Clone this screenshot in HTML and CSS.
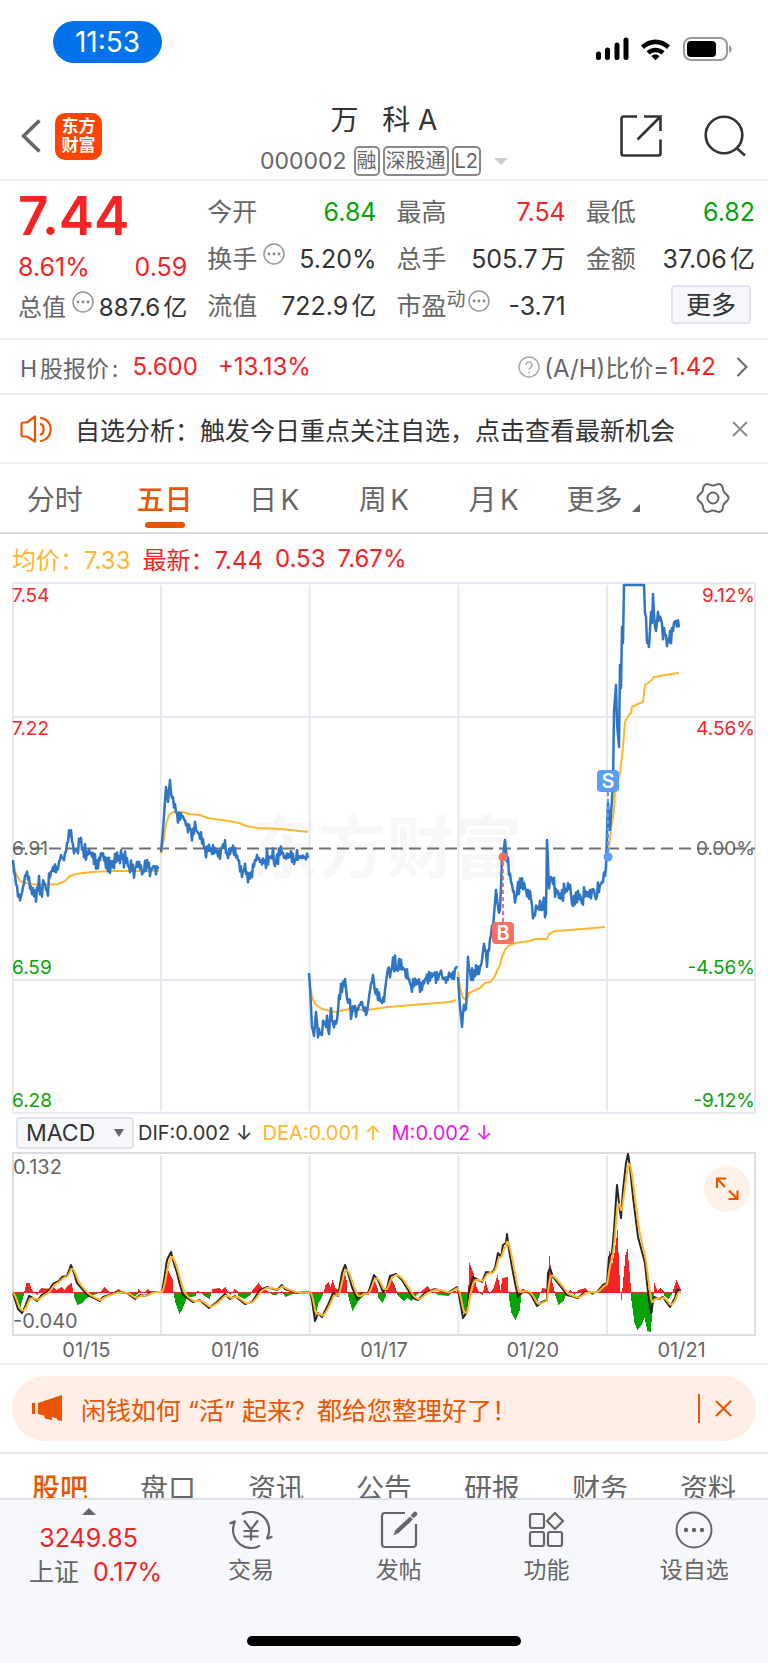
FILE: index.html
```html
<!DOCTYPE html>
<html lang="zh-CN">
<head>
    <meta charset="UTF-8">
    <title>万 科A 000002</title>
    <meta name="viewport" content="width=device-width, initial-scale=1.0">
    <link rel="stylesheet" href="styles.css">
</head>
<body>
    <div class="statusbar">
        <span class="statusbar__time">11:53</span>
        <svg class="statusbar__icons" width="137" height="26" viewBox="0 0 137 26">
            <g stroke="#000" stroke-width="5" stroke-linecap="round">
                <path d="M3.500 18v3.500M12.500 14v7.500M22 9v12.500M31 4v17.500"/>
            </g>
            <path d="M46 9.500c8-8 21-8 29 0l-3 3.400c-6.500-6.300-16.500-6.300-23 0zM51.500 15.200c5-4.700 13-4.700 18 0l-3.100 3.200c-3.300-3-8.500-3-11.800 0zM60.500 24.300l-4.200-4.200c2.400-2.100 6-2.100 8.400 0z"/>
            <rect x="89" y="2" width="43" height="22" rx="7" fill="none" stroke="#999" stroke-width="2"/>
            <rect x="92" y="5" width="29" height="16" rx="4"/>
            <path d="M134 9c3.500 1.500 3.500 6.500 0 8z" fill="#999"/>
        </svg>
    </div>

    <header class="header">
        <div class="header__left">
            <button class="icon-button" aria-label="返回">
                <svg width="20" height="34" viewBox="0 0 20 34" fill="none" stroke="#666" stroke-width="3.600"><path d="M18.500 1.500L2.500 17l16 15.500"/></svg>
            </button>
            <a class="logo" href="#"><span>东方</span><span>财富</span></a>
        </div>
        <div class="header__title">
            <h1>万&nbsp;&nbsp; 科 A</h1>
            <div class="header__code">
                <span>000002</span>
                <span class="badge">融</span>
                <span class="badge">深股通</span>
                <span class="badge">L2</span>
                <i class="caret"></i>
            </div>
        </div>
        <div class="header__right">
            <button class="icon-button" aria-label="分享">
                <svg width="42" height="42" viewBox="0 0 42 42" fill="none" stroke="#333" stroke-width="2.600">
                    <path d="M17 1.500H3.500a2 2 0 0 0-2 2v35a2 2 0 0 0 2 2h35a2 2 0 0 0 2-2V24.500M24 1.500h16.500V16M40.500 1.500L17.500 24.500"/>
                </svg>
            </button>
            <button class="icon-button" aria-label="搜索">
                <svg width="43" height="42" viewBox="0 0 43 42" fill="none" stroke="#333" stroke-width="2.600"><circle cx="20" cy="20" r="18.300"/><path d="M32.500 33L41 40.500"/></svg>
            </button>
        </div>
    </header>

    <section class="quote">
        <div class="quote__main">
            <strong>7.44</strong>
            <div class="pair up"><span>8.61%</span><span>0.59</span></div>
            <div class="pair pair--tight"><span class="label">总值<svg class="more" viewBox="0 0 22 22"><use href="#more-dots"/></svg></span><span>887.6亿</span></div>
        </div>
        <div class="quote__column">
            <div class="pair"><span class="label">今开</span><span class="down">6.84</span></div>
            <div class="pair"><span class="label">换手<svg class="more" viewBox="0 0 22 22"><use href="#more-dots"/></svg></span><span>5.20%</span></div>
            <div class="pair"><span class="label">流值</span><span>722.9亿</span></div>
        </div>
        <div class="quote__column">
            <div class="pair"><span class="label">最高</span><span class="up">7.54</span></div>
            <div class="pair"><span class="label">总手</span><span>505.7万</span></div>
            <div class="pair"><span class="label">市盈<small>动</small><svg class="more more--flush" viewBox="0 0 22 22"><use href="#more-dots"/></svg></span><span>-3.71</span></div>
        </div>
        <div class="quote__column">
            <div class="pair"><span class="label">最低</span><span class="down">6.82</span></div>
            <div class="pair"><span class="label">金额</span><span>37.06亿</span></div>
            <button class="quote__more">更多</button>
        </div>
    </section>

    <a class="hshare" href="#">
        <span class="label">H股报价:</span>
        <span class="up">5.600</span>
        <span class="up">+13.13%</span>
        <span class="hshare__ratio">
            <svg width="22" height="22" viewBox="0 0 22 22" fill="none" stroke="#aaa" stroke-width="1.500"><circle cx="11" cy="11" r="10"/><path d="M8 9a3 3 0 1 1 4.500 2.600c-1 .6-1.500 1-1.500 2.200M11 15.500v1.500"/></svg>
            (A/H)比价=<b class="up">1.42</b>
        </span>
        <svg width="12" height="20" viewBox="0 0 12 20" fill="none" stroke="#666" stroke-width="2"><path d="M1.500 1l9 9-9 9"/></svg>
    </a>

    <div class="notice">
        <svg width="33" height="28" viewBox="0 0 33 28" fill="none" stroke="#ea5504" stroke-width="2.200" stroke-linejoin="round" stroke-linecap="round">
            <path d="M1.500 9.500q0-2 2-2H7L15 1.500v25L7 21.500H3.500q-2 0-2-2zM21 9c3.500 2 3.500 8.500 0 10.500M21 3c13 2 13 20.500 0 23"/>
        </svg>
        <a href="#">自选分析：触发今日重点关注自选，点击查看最新机会</a>
        <button class="icon-button" aria-label="关闭">
            <svg width="16" height="16" viewBox="0 0 16 16" stroke="#888" stroke-width="1.800"><path d="M1 1l14 14M15 1L1 15"/></svg>
        </button>
    </div>

    <nav class="tabs">
        <button>分时</button>
        <button class="active">五日</button>
        <button>日K</button>
        <button>周K</button>
        <button>月K</button>
        <button>更多<i class="corner"></i></button>
        <button aria-label="设置">
            <svg width="34" height="32" viewBox="0 0 34 32" fill="none" stroke="#666" stroke-width="2">
                <path d="M9.250 2.600C12.300.85 13.500 3.500 17 3.500S21.700.85 24.750 2.600S26.050 6.700 27.800 9.750S32.500 12.500 32.500 16S29.550 19.200 27.800 22.250S27.800 27.650 24.750 29.400S20.500 28.500 17 28.500S12.300 31.150 9.250 29.400S7.950 25.300 6.200 22.250S1.500 19.500 1.500 16S4.450 12.800 6.200 9.750S6.200 4.350 9.250 2.600Z"/>
                <circle cx="17" cy="16" r="5.500"/>
            </svg>
        </button>
    </nav>

    <main class="charts">
        <div class="legend">
            <span class="avg">均价：7.33</span>
            <span class="up">最新：7.44</span>
            <span class="up">0.53</span>
            <span class="up">7.67%</span>
        </div>

        <svg class="chart" viewBox="0 0 744 532" role="img" aria-label="五日走势">
            <text class="watermark" x="374" y="291" text-anchor="middle">东方财富</text>
            <path class="grid" d="M1 1H743V531H1ZM149 3V529M297.500 3V529M446.500 3V529M595 3V529M1 135H743M1 398H743"/>
            <path class="base" d="M1 266.500H743"/>
            <g class="axis">
                <text class="up" x="0" y="20">7.54</text>
                <text class="up" x="0" y="153">7.22</text>
                <text x="0" y="273">6.91</text>
                <text class="down" x="0" y="392">6.59</text>
                <text class="down" x="0" y="525">6.28</text>
                <g text-anchor="end">
                    <text class="up" x="743" y="20">9.12%</text>
                    <text class="up" x="743" y="153">4.56%</text>
                    <text x="743" y="273">0.00%</text>
                    <text class="down" x="743" y="392">-4.56%</text>
                    <text class="down" x="743" y="525">-9.12%</text>
                </g>
            </g>
            <path id="average" class="line line--average"/>
            <path id="price" class="line line--price"/>
            <g class="mark mark--buy">
                <path d="M491 280V340"/>
                <circle cx="491" cy="275" r="4.500"/>
                <rect x="480" y="340" width="22" height="22" rx="4"/>
                <text x="491" y="358" text-anchor="middle">B</text>
            </g>
            <g class="mark mark--sell">
                <path d="M596 210V271"/>
                <circle cx="596" cy="275" r="4.500"/>
                <rect x="585" y="188" width="22" height="22" rx="4"/>
                <text x="596" y="206" text-anchor="middle">S</text>
            </g>
        </svg>

        <div class="indicator">
            <div class="indicator__select">
                <select aria-label="指标"><option>MACD</option></select>
                <i class="arrow-down"></i>
            </div>
            <span class="dif">DIF:0.002 ↓</span>
            <span class="avg">DEA:0.001 ↑</span>
            <span class="macd">M:0.002 ↓</span>
        </div>

        <div class="macd-chart">
            <svg class="chart" viewBox="0 0 744 184" role="img" aria-label="MACD">
                <path class="grid grid--macd" d="M1 1H743V183H1Z"/>
                <path class="grid" d="M149 3V182M297.500 3V182M446.500 3V182M595 3V182"/>
                <path id="bars-up" class="bars bars--up"/>
                <path id="bars-down" class="bars bars--down"/>
                <g class="axis axis--macd">
                    <text x="1" y="22">0.132</text>
                    <text x="1" y="176">-0.040</text>
                </g>
                <path id="dif" class="line line--dif"/>
                <path id="dea" class="line line--average"/>
            </svg>
            <button class="expand" aria-label="全屏">
                <svg width="24" height="24" viewBox="0 0 24 24" fill="none" stroke="#ea5504" stroke-width="2.200"><path d="M11 1.500H2V11M2 1.500L10 10M22.500 13.500V22H13.500M22.500 22L14 13.500"/></svg>
            </button>
        </div>
        <div class="dates">
            <span>01/15</span><span>01/16</span><span>01/17</span><span>01/20</span><span>01/21</span>
        </div>
    </main>

    <div class="promo">
        <div class="promo__inner">
            <svg width="31" height="27" viewBox="0 0 31 27" fill="#ea5504"><path d="M0 8h3v11H0zM6 8L30 0v26l-5-1v-1.500l-5-1.500v3l-7-1.500-1-3L6 19z"/></svg>
            <a href="#">闲钱如何 “活” 起来？都给您整理好了！</a>
            <i class="promo__rule"></i>
            <button class="icon-button" aria-label="关闭">
                <svg width="17" height="17" viewBox="0 0 17 17" stroke="#ea5504" stroke-width="2"><path d="M1 1l15 15M16 1L1 16"/></svg>
            </button>
        </div>
    </div>

    <nav class="sections">
        <a class="active" href="#">股吧</a>
        <a href="#">盘口</a>
        <a href="#">资讯</a>
        <a href="#">公告</a>
        <a href="#">研报</a>
        <a href="#">财务</a>
        <a href="#">资料</a>
    </nav>

    <footer class="toolbar">
        <div class="toolbar__items">
            <button class="toolbar__index">
                <i class="arrow-up"></i>
                <span class="up">3249.85</span>
                <span class="toolbar__change">上证 <b class="up">0.17%</b></span>
            </button>
            <button>
                <svg width="44" height="38" viewBox="0 0 44 38" fill="none" stroke="#666" stroke-width="2.200">
                    <path d="M13 3.400A18 18 0 0 1 39.400 24L38 27.500M31 34.600A18 18 0 0 1 4.600 14.500L6 10.500M6.500 10L.5 12.500M37.500 28l6-2.500M15 9.500l7 9 7-9M14.500 20h15M14.500 25.500h15M22 18.500v11"/>
                </svg>
                交易
            </button>
            <button>
                <svg width="38" height="38" viewBox="0 0 38 38" fill="none" stroke="#666" stroke-width="2.200">
                    <path d="M25 2H5a3 3 0 0 0-3 3v28a3 3 0 0 0 3 3h28a3 3 0 0 0 3-3V13"/>
                    <path d="M13.500 24.500l2-5.500L30 5.500l3 3L18.500 22z" fill="#666" stroke="none"/>
                    <path d="M33.500 4.500L35 3" stroke-width="4.500" stroke-linecap="round"/>
                </svg>
                发帖
            </button>
            <button>
                <svg width="38" height="38" viewBox="0 0 38 38" fill="none" stroke="#666" stroke-width="2.200" stroke-linejoin="round">
                    <rect x="3" y="3" width="14" height="14" rx="2"/><rect x="3" y="21" width="14" height="14" rx="2"/><rect x="21" y="21" width="14" height="14" rx="2"/><path d="M28 2l8 8-8 8-8-8z"/>
                </svg>
                功能
            </button>
            <button>
                <svg width="38" height="38" viewBox="0 0 38 38" fill="none" stroke="#666" stroke-width="2"><circle cx="19" cy="19" r="17.500"/><g fill="#666" stroke="none"><circle cx="11" cy="19" r="2.200"/><circle cx="19" cy="19" r="2.200"/><circle cx="27" cy="19" r="2.200"/></g></svg>
                设自选
            </button>
        </div>
        <div class="home-indicator"></div>
    </footer>

    <svg class="symbols" aria-hidden="true">
        <symbol id="more-dots" viewBox="0 0 22 22">
            <circle cx="11" cy="11" r="10" fill="none" stroke="#999" stroke-width="1.500"/>
            <g fill="#888"><circle cx="6" cy="11" r="1.400"/><circle cx="11" cy="11" r="1.400"/><circle cx="16" cy="11" r="1.400"/></g>
        </symbol>
    </svg>

    <script src="chart.js"></script>
</body>
</html>
```

FILE: styles.css
```css
body {
    margin: 0;
    background: #fff;
    color: #333;
    font-family: Inter, "Noto Sans CJK SC", sans-serif;
    font-size: 24px;
    text-autospace: normal;
}

* {
    box-sizing: border-box;
}

a {
    color: inherit;
    text-decoration: none;
}

b {
    font-weight: 400;
}

svg {
    flex: none;
}

button {
    padding: 0;
    border: 0;
    background: none;
    color: inherit;
    font: inherit;
    cursor: pointer;
}

.icon-button {
    display: flex;
}

.up {
    color: #f52323;
    fill: #f52323;
}

.down {
    color: #05a305;
    fill: #05a305;
}

.avg {
    color: #ffb62e;
}

.label {
    color: #666;
}

.symbols {
    position: absolute;
    width: 0;
    height: 0;
}

/* status bar */

.statusbar {
    display: flex;
    justify-content: space-between;
    height: 90px;
    padding: 21px 36px 0 53px;
}

.statusbar__time {
    width: 109px;
    height: 42px;
    border-radius: 21px;
    background: #0273eb;
    color: #fff;
    font-size: 28px;
    line-height: 43px;
    text-align: center;
}

.statusbar__icons {
    margin-top: 15px;
}

/* header */

.header {
    display: grid;
    grid-template-columns: 1fr auto 1fr;
    align-items: center;
    height: 91px;
    padding: 3px 21px 0;
    border-bottom: 2px solid #efefef;
}

.header__left,
.header__right {
    display: flex;
    align-items: center;
    gap: 14px;
}

.header__right {
    justify-content: flex-end;
    gap: 42px;
}

.logo {
    display: flex;
    flex-direction: column;
    align-items: center;
    justify-content: center;
    width: 47px;
    height: 47px;
    border-radius: 10px;
    background: #ff4400;
    color: #fff;
    font-size: 17px;
    font-weight: 700;
    line-height: 19px;
}

.header__title {
    display: flex;
    flex-direction: column;
    align-items: center;
    gap: 6px;
    padding-top: 4px;
}

.header__title h1 {
    margin: 0;
    font-size: 28px;
    font-weight: 400;
    line-height: 40px;
}

.header__code {
    display: flex;
    align-items: center;
    gap: 3px;
    color: #666;
    font-size: 23px;
    line-height: 30px;
}

.badge {
    height: 30px;
    padding: 0 1px;
    border: 2px solid #888;
    border-radius: 5px;
    font-size: 20px;
    line-height: 26px;
}

.badge:nth-child(2) {
    margin-left: 4px;
}

.caret {
    margin-left: 10px;
    border: 7px solid transparent;
    border-top-color: #ccc;
    border-bottom: 0;
}

/* quote */

.quote {
    display: grid;
    grid-template-columns: repeat(4, 1fr);
    gap: 20px;
    height: 159px;
    padding: 8px 13px 0 18px;
    border-bottom: 2px solid #efefef;
    font-size: 25px;
}

.quote__main strong {
    display: block;
    height: 55px;
    color: #f52323;
    font-size: 53px;
    font-weight: 600;
    line-height: 55px;
}

.pair {
    display: flex;
    justify-content: space-between;
    height: 47px;
    line-height: 47px;
    white-space: nowrap;
}

.quote__main .pair {
    height: 40px;
}

.quote__main .pair--tight {
    font-size: 24px;
}

.label small {
    font-size: 19px;
    line-height: 0;
    vertical-align: 9px;
}

.more {
    width: 22px;
    height: 22px;
    margin-left: 6px;
    vertical-align: 3px;
}

.more--flush {
    margin-left: 2px;
}

.quote__more {
    display: block;
    width: 80px;
    height: 39px;
    margin: 2px 4px 0 auto;
    border: 2px solid #e0e3ea;
    border-radius: 4px;
    background: #f7f8fb;
    line-height: 34px;
}

/* H share row and notice */

.hshare {
    display: flex;
    align-items: center;
    gap: 20px;
    height: 55px;
    padding: 0 20px;
    border-bottom: 2px solid #e8e8ea;
    font-size: 24px;
}

.hshare .label {
    margin-right: -6px;
    font-size: 23px;
}

.hshare__ratio {
    display: flex;
    align-items: center;
    margin-left: auto;
    color: #666;
}

.hshare__ratio svg {
    margin-right: 4px;
}

.notice {
    display: flex;
    align-items: center;
    height: 69px;
    padding: 0 20px;
    border-bottom: 2px solid #efefef;
    font-size: 25px;
}

.notice a {
    flex: 1;
    margin-left: 22px;
    white-space: nowrap;
}

/* period tabs */

.tabs {
    display: grid;
    grid-template-columns: repeat(7, 1fr);
    height: 70px;
    border-bottom: 2px solid #d8dce0;
    color: #666;
    font-size: 28px;
}

.tabs button {
    display: flex;
    align-items: center;
    justify-content: center;
    position: relative;
}

.tabs .active {
    color: #ea5504;
    font-weight: 500;
}

.tabs .active::after {
    content: "";
    position: absolute;
    bottom: 4px;
    width: 40px;
    height: 6px;
    border-radius: 3px;
    background: #ea5504;
}

.corner {
    align-self: flex-end;
    margin: 0 0 20px 10px;
    border-bottom: 8px solid #666;
    border-left: 8px solid transparent;
}

/* charts */

.charts {
    padding: 0 12px;
    border-bottom: 2px solid #efefef;
}

.legend {
    display: flex;
    align-items: center;
    gap: 12px;
    height: 48px;
    font-size: 24px;
}

.chart {
    display: block;
    width: 100%;
}

.grid {
    fill: none;
    stroke: #e6e9f0;
    stroke-width: 2;
}

.grid--macd {
    stroke: #d9dce1;
}

.base {
    stroke: #707070;
    stroke-width: 2;
    stroke-dasharray: 12 6;
}

.watermark {
    fill: #f7f7f7;
    font-size: 68px;
    font-weight: 700;
}

.axis {
    fill: #666;
    font-size: 19px;
}

.axis--macd {
    font-size: 20px;
}

.line {
    fill: none;
    stroke-width: 2;
    stroke-linejoin: round;
}

.line--price {
    stroke: #2f75c4;
    stroke-width: 2.500;
}

.line--average {
    stroke: #ffb62e;
}

.line--dif {
    stroke: #262626;
}

.bars {
    fill: none;
    stroke-width: 1;
}

.bars--up {
    stroke: #f52323;
}

.bars--down {
    stroke: #05a305;
}

.mark path {
    stroke-width: 2;
    stroke-dasharray: 4 3;
}

.mark text {
    fill: #fff;
    font-size: 20px;
    font-weight: 600;
}

.mark--buy {
    fill: #fa6e64;
}

.mark--buy path {
    stroke: #fa6e64;
}

.mark--sell {
    fill: #5a9dfa;
}

.mark--sell path {
    stroke: #5a9dfa;
}

.indicator {
    display: flex;
    align-items: center;
    gap: 10px;
    height: 38px;
    font-size: 20px;
}

.indicator__select {
    display: grid;
    align-items: center;
    width: 118px;
    height: 32px;
    margin-left: 4px;
}

.indicator__select select {
    grid-area: 1 / 1;
    height: 32px;
    padding: 0 8px;
    border: 2px solid #e0e3ea;
    border-radius: 4px;
    appearance: none;
    background: #f7f8fb;
    color: #333;
    font: inherit;
    font-size: 23px;
}

.arrow-down {
    grid-area: 1 / 1;
    justify-self: end;
    margin-right: 10px;
    border: 5px solid transparent;
    border-top: 8px solid #666;
    border-bottom: 0;
    pointer-events: none;
}

.dif {
    margin-left: -6px;
}

.macd {
    color: #e619e6;
}

.macd-chart {
    position: relative;
}

.expand {
    display: flex;
    align-items: center;
    justify-content: center;
    position: absolute;
    top: 14px;
    right: 6px;
    width: 46px;
    height: 46px;
    border-radius: 50%;
    background: #fff0e8;
}

.dates {
    display: grid;
    grid-template-columns: repeat(5, 1fr);
    height: 27px;
    color: #666;
    font-size: 20px;
    line-height: 29px;
    text-align: center;
}

/* promo */

.promo {
    padding: 11px 12px;
    border-bottom: 2px solid #e6e8ec;
}

.promo__inner {
    display: flex;
    align-items: center;
    height: 65px;
    padding: 0 24px 0 20px;
    border-radius: 33px;
    background: #feeee5;
    color: #ea5504;
    font-size: 25px;
}

.promo__inner a {
    flex: 1;
    margin-left: 18px;
    white-space: nowrap;
}

.promo__rule {
    width: 2px;
    height: 29px;
    margin-right: 15px;
    background: #ea5504;
}

/* section tabs, partly under the toolbar */

.sections {
    display: grid;
    grid-template-columns: repeat(7, 1fr);
    height: 72px;
    padding: 0 6px;
    color: #666;
    font-size: 28px;
    line-height: 70px;
    text-align: center;
}

.sections .active {
    color: #ea5504;
    font-weight: 500;
}

/* toolbar */

.toolbar {
    position: fixed;
    right: 0;
    bottom: 0;
    left: 0;
    border-top: 2px solid #dfe1e6;
    background: #f7f8fb;
}

.toolbar__items {
    display: grid;
    grid-template-columns: 6fr repeat(4, 5fr);
    height: 136px;
    color: #666;
    font-size: 23px;
    line-height: 34px;
}

.toolbar__items button {
    display: flex;
    flex-direction: column;
    align-items: center;
    padding-top: 11px;
}

.toolbar__items svg {
    margin-bottom: 4px;
}

.toolbar__items .toolbar__index {
    padding-top: 8px;
    font-size: 25px;
    white-space: nowrap;
}

.toolbar__change {
    display: flex;
    gap: 14px;
    margin-left: 14px;
}

.arrow-up {
    margin-bottom: 6px;
    border: 7px solid transparent;
    border-top: 0;
    border-bottom-color: #666;
}

.home-indicator {
    width: 274px;
    height: 10px;
    margin: 0 auto 17px;
    border-radius: 5px;
    background: #000;
}
```

FILE: chart.js
```js
// x,y pairs in chart units, one string per trading day
var price = [
  '1,278 2,290 4,301 6,311 9,316 11,305 12,295 16,290 18,303 21,309 24,313 27,303 29,309 32,300 35,311 38,293 41,285 45,291 49,273 52,278 55,261 58,250 61,263 63,268 66,268 68,256 71,268 75,273 80,270 86,284 90,267 93,280 98,283 101,279 110,276 115,279 118,287 121,288 126,284 131,291 135,284 138,288 142,284 147,286',
  '149,270 151,248 154,205 156,220 158,198 159,215 162,218 164,230 166,236 171,235 175,243 180,250 183,246 188,254 191,263 195,268 205,270 209,268 212,260 216,276 221,266 226,278 231,291 233,285 236,295 240,291 243,278 247,276 250,282 255,276 261,275 263,284 265,275 269,268 273,275 278,272 282,281 285,275 296,276',
  '297,391 298,405 300,445 302,454 304,430 306,450 310,453 311,440 315,442 317,452 318,430 322,445 325,438 327,418 330,403 333,397 335,416 338,418 339,437 341,425 344,433 346,425 350,420 351,428 355,430 358,408 361,393 363,410 366,416 370,421 373,408 376,385 379,390 383,378 386,388 388,383 393,388 399,404 403,400 411,405 414,393 418,396 423,391 426,396 429,389 431,397 438,394 441,390 445,384',
  '446,395 448,425 450,445 451,428 454,427 456,380 458,392 461,390 467,392 470,378 472,362 475,378 479,351 481,345 484,308 486,325 488,328 490,281 491,275 493,258 495,278 498,296 501,308 504,319 506,306 512,303 515,311 518,309 520,325 522,334 525,326 530,328 531,320 534,331 535,258 537,303 539,295 541,301 546,313 550,311 553,308 558,303 560,322 563,315 565,320 568,313 570,321 572,309 578,315 581,306 584,318 586,308 591,298 594,291',
  '594,285 596,221 598,248 601,201 602,130 604,103 605,141 607,165 608,83 609,106 610,45 611,61 612,3 632,3 633,31 634,35 635,55 637,65 639,30 640,41 641,12 642,38 644,49 646,30 647,38 649,36 651,49 652,46 654,61 657,58 661,49 663,33 664,40 666,40 667,45'
];

var average = [
  '1,280 4,292 8,299 14,301 20,302 30,303 46,302 53,299 58,294 64,292 80,290 100,289 147,289',
  '149,272 152,256 154,242 157,233 161,230 170,230 177,232 188,233 196,236 216,239 227,241 234,244 245,246 270,247 296,250',
  '298,404 300,415 303,422 310,427 323,430 338,427 355,428 376,425 388,424 438,420 444,418',
  '446,390 448,406 451,416 455,418 457,411 468,406 473,401 478,400 482,396 485,389 488,383 490,375 493,368 496,364 503,361 518,359 523,357 535,357 537,352 543,349 571,347 593,345',
  '596,275 599,247 602,228 603,208 608,191 611,165 613,140 616,134 619,131 620,125 626,122 631,120 633,103 639,99 642,95 653,93 667,91'
];

var dif = '1,141 6,157 10,161 13,155 17,144 21,146 25,149 30,143 36,140 41,132 47,129 50,125 55,124 59,113 62,121 65,131 71,138 76,143 88,149 91,145 105,140 115,141 123,147 128,143 133,144 140,140 150,140 152,128 155,108 159,100 161,108 165,121 168,133 171,143 181,150 188,148 197,156 205,150 213,142 218,147 223,144 233,152 240,150 248,138 255,135 265,138 270,133 273,137 285,141 298,140 300,148 303,169 306,161 310,165 316,153 321,141 326,144 330,121 333,113 336,121 340,135 345,147 351,141 356,142 362,123 366,128 371,140 375,136 378,124 384,122 390,128 401,146 406,148 413,141 423,137 436,141 445,135 447,143 451,166 455,160 457,138 461,125 470,130 474,120 480,121 483,116 486,101 489,105 491,93 494,91 495,82 497,98 500,115 503,131 506,145 511,138 518,141 525,154 530,150 535,148 536,121 538,116 541,125 550,136 555,143 566,146 573,140 585,140 591,133 595,131 597,105 600,101 602,78 605,33 607,51 609,66 611,38 614,11 616,2 618,15 621,45 626,85 633,111 636,140 639,161 642,145 647,147 651,145 658,155 663,146 665,138 669,138';

// x,height pairs, positive bars go up
var bars = '1,0 4,-8 8,-14 11,-3 12,2 14,10 17,10 19,4 22,0 25,-2 27,3 29,5 40,4 41,6 44,3 49,6 52,3 55,7 59,10 61,1 62,-5 65,-12 70,-10 73,-6 78,-3 84,-1 88,1 92,6 96,2 100,0 106,4 110,1 117,-2 122,-4 125,-1 126,4 129,1 132,0 135,4 139,1 149,1 151,10 154,18 156,22 160,14 161,0 163,-10 167,-21 170,-16 174,-6 179,-4 183,-3 185,2 188,1 192,-3 197,-6 199,0 200,4 207,5 209,3 213,6 216,0 218,-2 222,4 225,2 226,-3 232,-6 238,-2 240,3 246,10 250,5 255,2 260,-2 264,-2 269,2 273,-4 280,-1 285,0 297,1 299,-8 302,-26 306,-10 309,-5 311,0 313,8 316,11 318,6 320,13 323,5 326,3 329,15 332,22 334,13 335,0 337,-8 340,-18 346,-8 351,-3 354,0 357,5 361,16 365,5 366,-5 370,-10 373,-4 374,5 378,16 382,8 384,2 385,-2 391,-8 395,-5 399,-8 403,-3 408,1 415,7 419,2 426,-2 436,-3 442,3 446,-1 448,-10 452,-23 455,-10 456,8 457,30 461,20 464,6 467,0 470,-2 473,12 476,2 477,-1 481,5 485,18 488,3 490,15 495,16 496,1 497,-8 499,-20 503,-27 507,-18 509,-2 512,1 520,-3 525,-8 528,0 530,5 535,4 537,37 540,10 542,2 543,-3 546,-12 551,-8 554,-1 558,3 562,-2 566,3 573,5 577,0 580,-2 584,1 589,5 594,8 597,42 600,30 602,40 605,63 607,18 608,0 609,-7 610,5 613,38 615,44 618,10 619,-8 622,-30 625,-37 629,-32 632,-25 635,-38 638,-39 641,-10 642,10 645,2 648,5 651,2 652,-3 656,-6 659,-2 661,4 664,13 668,4 669,0';

var zero = 141;

var parse = function (text) {
  return text.split(' ').map(function (pair) {
    return pair.split(',').map(Number);
  });
};

// one sample per unit of x
var sample = function (points) {
  var result = [points[0]];

  for (var i = 1; i < points.length; i++) {
    var a = points[i - 1], b = points[i];

    for (var x = a[0] + 1; x < b[0]; x++) {
      result.push([x, a[1] + (b[1] - a[1]) * (x - a[0]) / (b[0] - a[0])]);
    }
    result.push(b);
  }

  return result;
};

// small tick-by-tick moves between the traced points
var addTicks = function (points) {
  return points.map(function (point, i) {
    var next = points[i + 1] || point;

    if (point[1] < 5 || Math.abs(next[1] - point[1]) > 7) {
      return point;
    }
    var size = Math.abs(Math.sin(point[0] * 12.9898) * 43758.5453) % 1;

    return [point[0], point[1] + (i % 2 ? 9 : -9) * size * size];
  });
};

var toPath = function (points) {
  return 'M' + points.map(function (point) {
    return point[0] + ' ' + point[1].toFixed(1);
  }).join('L');
};

var draw = function (id, d) {
  document.getElementById(id).setAttribute('d', d);
};

draw('price', price.map(function (day) {
  return toPath(addTicks(sample(parse(day))));
}).join(''));

draw('average', average.map(function (day) {
  return toPath(parse(day));
}).join(''));

var difPoints = sample(parse(dif)), last = difPoints[0][1];

draw('dif', toPath(difPoints));
draw('dea', toPath(difPoints.map(function (point) {
  last += (point[1] - last) * 0.34;
  return [point[0], last];
})));

var up = '', down = '';

sample(parse(bars)).forEach(function (bar) {
  var line = 'M' + (bar[0] + 0.5) + ' ' + zero + 'v' + -bar[1].toFixed(1);

  if (bar[1] < 0) {
    down += line;
  } else {
    up += line;
  }
});

draw('bars-up', up + 'M1 ' + (zero - 0.5) + 'H669');
draw('bars-down', down);
```
